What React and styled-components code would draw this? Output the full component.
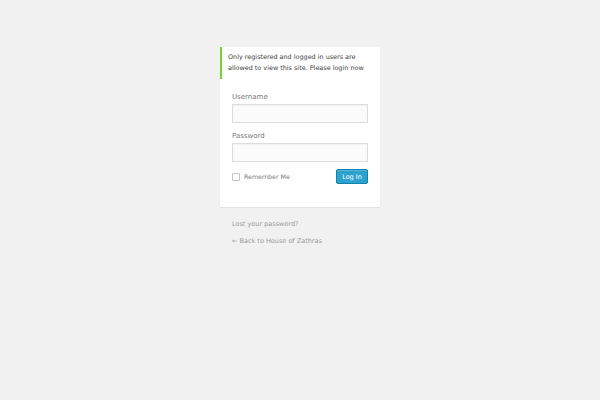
import React from "react";
import styled, { createGlobalStyle } from "styled-components";

const Global = createGlobalStyle`
  html, body { margin: 0; padding: 0; background: #f1f1f1; }
  body { font-family: "DejaVu Sans", Verdana, sans-serif; }
`;

const Page = styled.div`
  width: 600px;
  height: 400px;
  display: flex;
  flex-direction: column;
  align-items: center;
  padding-top: 47px;
  box-sizing: border-box;
`;

const Wrap = styled.div`
  width: 160px;
`;

const Card = styled.div`
  background: #fff;
  box-shadow: 0 1px 1px rgba(0, 0, 0, 0.06);
`;

const Message = styled.p`
  margin: 0;
  border-left: 2px solid #7ad03a;
  padding: 5px 4px 5px 6px;
  font-size: 6.45px;
  line-height: 11px;
  color: #444;
`;

const Form = styled.form`
  padding: 13px 12px 23px;
  display: flex;
  flex-direction: column;
`;

const Label = styled.label`
  font-size: 7px;
  line-height: 10px;
  color: #777;
  display: block;
  margin-bottom: 2px;
`;

const Input = styled.input`
  box-sizing: border-box;
  width: 136px;
  height: 19px;
  margin: 0 0 8px;
  border: 1px solid #ddd;
  background: #fbfbfb;
  box-shadow: inset 0 1px 2px rgba(0, 0, 0, 0.05);
  outline: none;
`;

const Row = styled.div`
  display: flex;
  justify-content: space-between;
  align-items: center;
  margin-top: -1px;
`;

const Remember = styled.label`
  display: flex;
  align-items: center;
  gap: 4px;
  font-size: 6.3px;
  color: #777;
`;

const Box = styled.span`
  width: 8px;
  height: 8px;
  box-sizing: border-box;
  border: 1px solid #c4c4c4;
  border-radius: 1px;
  background: #fff;
`;

const Button = styled.button`
  width: 32px;
  height: 15px;
  padding: 0;
  background: #2ea2cc;
  border: 1px solid #0e81ad;
  border-radius: 2px;
  color: #fff;
  font-family: "DejaVu Sans", Verdana, sans-serif;
  font-size: 6.5px;
  box-shadow: inset 0 1px 0 rgba(120, 200, 230, 0.5);
`;

const Nav = styled.p`
  margin: ${(p) => p.$top}px 0 0;
  padding: 0 12px;
  font-size: 6.5px;
  line-height: 10px;
  color: #999;
`;

export default function App() {
  return (
    <>
      <Global />
      <Page>
        <Wrap>
          <Card>
            <Message>
              Only registered and logged in users are allowed to view this site. Please login now
            </Message>
            <Form>
              <Label>Username</Label>
              <Input type="text" />
              <Label>Password</Label>
              <Input type="password" />
              <Row>
                <Remember>
                  <Box />
                  Remember Me
                </Remember>
                <Button type="button">Log In</Button>
              </Row>
            </Form>
          </Card>
          <Nav $top={12}>Lost your password?</Nav>
          <Nav $top={7}>← Back to House of Zathras</Nav>
        </Wrap>
      </Page>
    </>
  );
}
